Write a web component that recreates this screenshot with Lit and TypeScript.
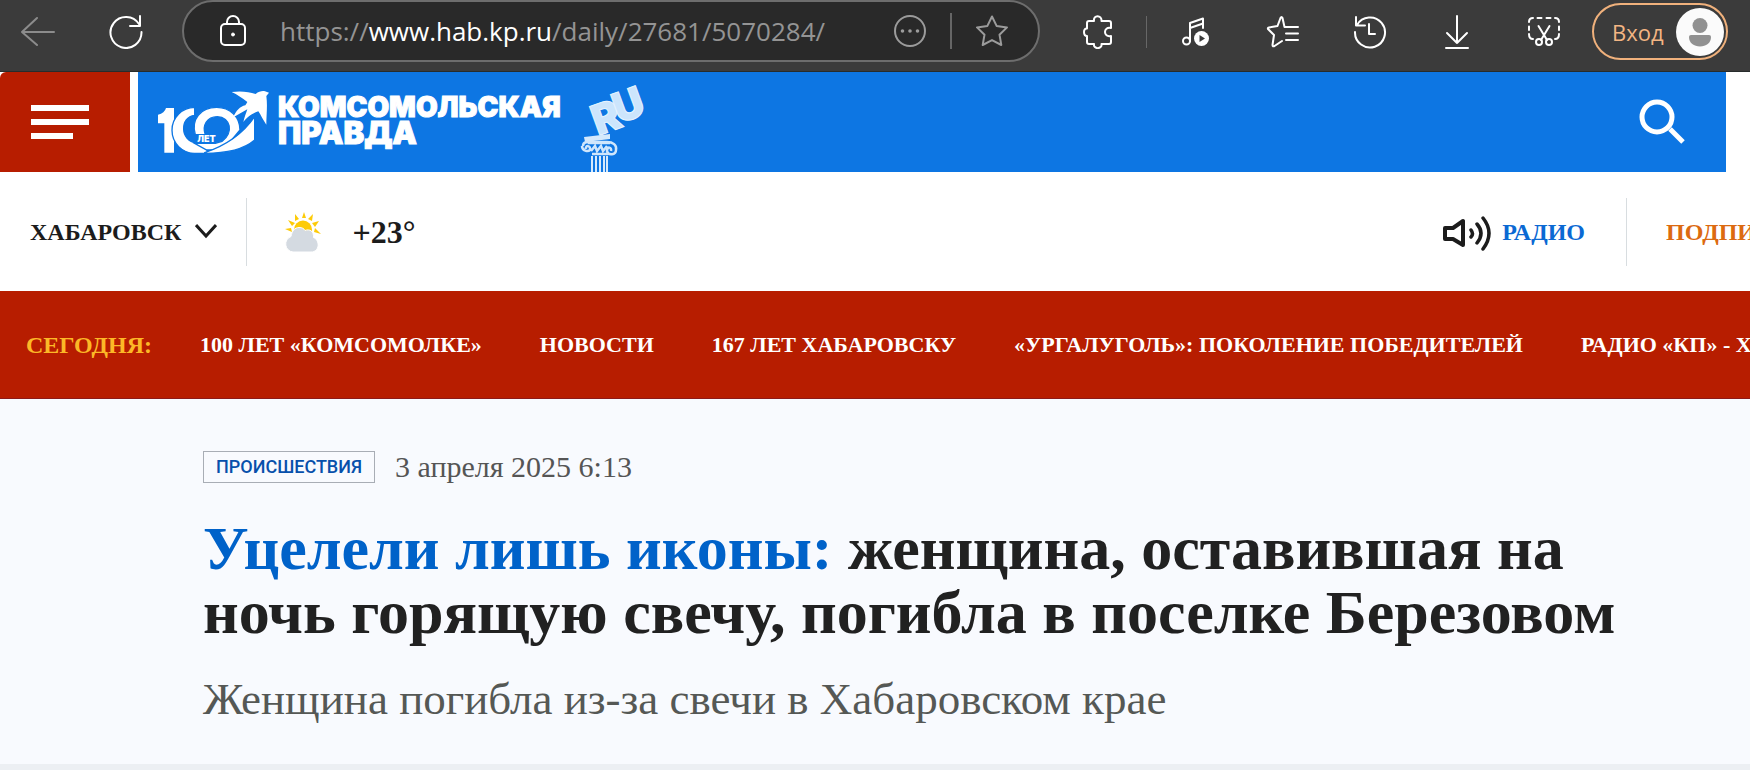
import { LitElement, html, css, svg } from "lit";
import { customElement } from "lit/decorators.js";

@customElement("browser-bar")
class BrowserBar extends LitElement {
  static styles = css`
    :host { display: block; }
    .bar { display: flex; align-items: flex-start; height: 72px; box-sizing: border-box; background: #3b3b3b; border-bottom: 1px solid #272c2c; color: #fff; }
    button { font: inherit; color: inherit; background: none; border: 0; padding: 0; margin: 0; cursor: pointer; display: flex; align-items: center; justify-content: center; flex: none; }
    svg { display: block; fill: none; stroke: currentColor; stroke-width: 2; stroke-linecap: round; stroke-linejoin: round; }
    .tool { width: 87px; height: 64px; }
    .back { width: 76px; color: #8c8c8c; }
    .reload { width: 100px; margin-right: 6px; }
    .address { flex: 1; min-width: 0; height: 62px; box-sizing: border-box; border: 2px solid #6d6d6d; border-radius: 31px; background: #292929; display: flex; align-items: center; margin-right: 14px; }
    .lock { margin-left: 36px; width: 26px; flex: none; }
    .url { flex: 1; min-width: 0; margin-left: 34px; white-space: nowrap; overflow: hidden; font: 26px/40px "Open Sans", "Noto Sans", sans-serif; color: #949494; text-decoration: none; }
    .url b { font-weight: 400; color: #fff; }
    .muted { color: #9b9b9b; width: 32px; height: 58px; }
    .line { width: 2px; height: 36px; background: #666; margin: 0 24px; flex: none; }
    .fav { margin-right: 30px; }
    .split { width: 1px; height: 32px; margin: 16px 5px 0; background: #676767; flex: none; }
    .login { margin: 3px 22px 0 5px; height: 57px; width: 136px; box-sizing: border-box; border: 2px solid #f0b17c; border-radius: 29px; color: #f3b583; font: 22px/32px "Open Sans", "Noto Sans", sans-serif; justify-content: space-between; padding: 0 2px 0 18px; }
    .face { width: 48px; height: 48px; flex: none; }
  `;
  render() {
    return html`<div class="bar">
      <button class="tool back" aria-label="Назад"><svg width="34" height="34" viewBox="0 0 34 34"><path d="M33 17H1M16 3 1 17l15 13"/></svg></button>
      <button class="tool reload" aria-label="Обновить"><svg width="34" height="34" viewBox="0 0 34 34"><path d="M30 9A15.500 15.500 0 1 0 32.500 17M31 1v10H21"/></svg></button>
      <div class="address">
        <svg class="lock" width="26" height="32" viewBox="0 0 26 32"><rect x="1" y="9" width="24" height="21" rx="4"/><path d="M7 9V7a6 6 0 0 1 12 0v2"/><circle cx="13" cy="19.500" r="1.500" fill="currentColor" stroke-width="1"/></svg>
        <a class="url" href="#">https://<b>www.hab.kp.ru</b>/daily/27681/5070284/</a>
        <button class="muted" aria-label="Ещё"><svg width="32" height="32" viewBox="0 0 32 32"><circle cx="16" cy="16" r="15"/><path stroke-width="3.600" d="M8.500 16h.01M16 16h.01M23.500 16h.01"/></svg></button>
        <span class="line"></span>
        <button class="muted fav" aria-label="В избранное"><svg width="32" height="32" viewBox="0 0 32 32"><path d="m16 1.500 4.600 9.400 10.400 1.500-7.500 7.300 1.800 10.300-9.300-4.900L6.700 30l1.800-10.300L1 12.400l10.400-1.500z"/></svg></button>
      </div>
      <button class="tool" aria-label="Расширения"><svg width="30" height="34" viewBox="0 0 30 34"><path d="M4 8q0-2 2-2h5c-1-6.500 8-6.500 7.500 0H26q2 0 2 2v5c-8-2-8 10 0 8v6q0 2-2 2h-7.500c1 5.500-8.500 5.500-7.500 0H6q-2 0-2-2v-6c-4 0-4-8 0-7.500z"/></svg></button>
      <span class="split"></span>
      <button class="tool" aria-label="Медиа"><svg width="28" height="30" viewBox="0 0 28 30"><path d="M8 24V6l13-4.500V11M8 11l13-4.500"/><circle cx="4.500" cy="24" r="3.500"/><circle cx="19.500" cy="21.500" r="7.500" fill="#fff" stroke="none"/><path d="m17.500 18 5.500 3.500-5.500 3.500z" fill="#3b3b3b" stroke="none"/></svg></button>
      <button class="tool" aria-label="Избранное"><svg width="34" height="34" viewBox="0 0 34 34"><path d="M20 12h-1.500L16.500 3q-1-2-2 0L11.500 11 3 12.500q-2 .5-.5 2L8 20 6.500 30q0 2 2 1L16 26M20 12h12M20 18.500h12M20 25h12"/></svg></button>
      <button class="tool" aria-label="Журнал"><svg width="34" height="34" viewBox="0 0 34 34"><path d="M4 10A15 15 0 1 1 2 17M3 2v8.500h9M16 9v10h6"/></svg></button>
      <button class="tool" aria-label="Загрузки"><svg width="26" height="34" viewBox="0 0 26 34"><path d="M13 1v27M3 18l10 10 10-10M2 33h22"/></svg></button>
      <button class="tool" aria-label="Снимок"><svg width="34" height="32" viewBox="0 0 34 32"><path d="M6 2c-3 0-4 1-4 4M10.500 2h4M19.500 2h4M28 2c3 0 4 1 4 4M2 10.500v3.500M32 10.500v3.500M2 18c0 3 1 5 4 5M32 18c0 3-1 5-4 5M11.500 10 20 24M22.500 10 14 24"/><circle cx="12" cy="26" r="3"/><circle cx="22" cy="26" r="3"/></svg></button>
      <button class="login"><span>Вход</span><svg class="face" viewBox="0 0 48 48"><circle cx="24" cy="24" r="24" fill="#fbfbfb" stroke="none"/><circle cx="24" cy="17.500" r="7.500" fill="#919191" stroke="none"/><path d="M15 27h18a2 2 0 0 1 2 2c0 6-5 9.500-11 9.500S13 35 13 29a2 2 0 0 1 2-2z" fill="#919191" stroke="none"/></svg></button>
    </div>`;
  }
}

const centenary = svg`
  <g fill="#fff">
    <path d="M24 98q20-4 24-20h24v134H43v-88H24z"/>
    <path stroke="#0d76e3" stroke-width="4" d="M134 76a68 69 0 1 0 0 138h40l-10-32h-25c-50-4-50-78-5-82z"/>
    <path fill-rule="evenodd" stroke="#0d76e3" stroke-width="4" d="M200 76c40 0 70 28 70 68l-50 60H170L134 184h62l20-6c36-24 26-74-14-74-32 0-46 28-36 54h-30c-14-46 16-82 64-82z"/>
    <path stroke="#0d76e3" stroke-width="4" d="M164 212c60-20 110-50 150-108v70c-30 26-76 40-150 40z"/>
    <path d="M245 30c30-4 52 0 72 6 10-8 20-10 28-8l12 4-8 10c4 28 0 58 0 86-10-14-16-28-24-40-10 4-26 8-45 32 4-16 8-26 12-38l-42 24c8-20 20-32 36-36 2-4 4-6 6-10-16-12-30-22-47-30z"/>
    <text x="142" y="180" class="small">ЛЕТ</text>
  </g>`;

const column = svg`
  <text transform="translate(18 52) rotate(-20)" class="ru">R</text>
  <text transform="translate(39 40) rotate(-20)" class="ru">U</text>
  <path d="M4 53l26-3v5L5 58z" fill="#d5e9fc"/>
  <path d="M8 59h22M3 62c0-5 6-4 9-4h15c6 0 10 3 9 8 0 5-8 6-9 1 0-5 5-4 4 0M10 66c-2 2-8 1-8-4M10 66c1-5-5-5-4-1M12 70h16M11 67l4-5 2 5 4-5 2 5 4-5" fill="none" stroke="#cfe6fc" stroke-width="2.500"/>
  <path d="M12 72v16M16 72v16M20 72v16M24 72v16M27 72v16" stroke="#d5e9fc" stroke-width="2"/>`;

@customElement("app-root")
class AppRoot extends LitElement {
  static styles = css`
    :host { display: block; min-height: 100vh; background: #eceff3; overflow: hidden; color: #1c1c1c; font-family: "Liberation Serif", serif; }
    a { color: inherit; text-decoration: none; }
    button { font: inherit; color: inherit; border: 0; padding: 0; background: none; cursor: pointer; }
    svg { display: block; flex: none; }
    .mast { display: flex; gap: 8px; padding-right: 24px; background: #fff; height: 100px; }
    .menu { width: 130px; background: #b71d00; flex: none; display: flex; flex-direction: column; gap: 8px; justify-content: center; align-items: flex-start; padding-left: 31px; border-top-left-radius: 6px; box-sizing: border-box; }
    .menu i { width: 58px; height: 6px; background: #fff; }
    .menu i:last-child { width: 42px; }
    .brand { flex: 1; background: #0d76e3; display: flex; color: #fff; align-items: flex-start; }
    .home { display: flex; padding-left: 20px; }
    .anniv { margin: 18px 8px 0 0; overflow: visible; }
    .small { font: 900 27px "Inter", sans-serif; }
    .ru { font: 900 42px "Inter", sans-serif; fill: #cce5fc; stroke: #e6f3ff; stroke-width: 1px; }
    .name { display: flex; flex-direction: column; font: 900 28px/25px "Inter", sans-serif; text-transform: uppercase; padding-top: 23px; -webkit-text-stroke: 1px #fff; }
    .name span + span { font-size: 31px; }
    .column { margin-left: 19px; margin-top: 12px; overflow: visible; }
    .search { margin: 26px 41px 0 auto; }
    .info { display: flex; align-items: center; height: 119px; padding-left: 30px; background: #fff; font-size: 24px; line-height: 32px; font-weight: 700; white-space: nowrap; }
    .city { display: flex; align-items: center; gap: 14px; font-weight: 700; }
    .rule { width: 1px; height: 68px; background: #d8dde0; flex: none; }
    .city + .rule { margin: 0 38px 0 29px; }
    .temp { font-size: 32px; margin-left: 31px; }
    .radio { margin-left: auto; display: flex; align-items: center; gap: 11px; color: #0b69d3; }
    .radio + .rule { margin: 0 39px 0 41px; }
    .sub { color: #dc6a10; width: 84px; overflow: hidden; }
    .today { display: flex; align-items: center; height: 108px; box-sizing: border-box; border-bottom: 1px solid #8d1a18; background: #b71d00; color: #fff; padding-left: 26px; font-size: 22px; line-height: 32px; font-weight: 700; white-space: nowrap; overflow: hidden; }
    .today b { color: #fcb827; margin-right: 48px; font-size: 24px; }
    .today nav { display: flex; gap: 58px; }
    .article { background: #f8fafe; padding: 50px 100px 40px 203px; }
    .meta { display: flex; align-items: center; gap: 20px; height: 36px; }
    .tag { border: 1px solid #a8adb5; font: 500 18px/30px Roboto, sans-serif; color: #0750ab; padding: 0 12px; }
    .date { font-size: 30px; line-height: 36px; color: #555; }
    h1 { margin: 31px 0 0; font-size: 62px; line-height: 64px; font-weight: 700; color: #212121; }
    h1 span { color: #0062c9; }
    .lead { margin: 30px 0 0; font-size: 45px; line-height: 50px; color: #555855; }
  `;
  topics = ["100 ЛЕТ «КОМСОМОЛКЕ»", "НОВОСТИ", "167 ЛЕТ ХАБАРОВСКУ", "«УРГАЛУГОЛЬ»: ПОКОЛЕНИЕ ПОБЕДИТЕЛЕЙ", "РАДИО «КП» - ХАБАРОВСК"];
  render() {
    return html`
      <browser-bar></browser-bar>
      <header class="mast">
        <button class="menu" aria-label="Меню"><i></i><i></i><i></i></button>
        <div class="brand">
          <a class="home" href="#">
            <svg class="anniv" width="112" height="64" viewBox="24 24 336 192">${centenary}</svg>
            <span class="name"><span>Комсомольская</span><span>правда</span></span>
          </a>
          <svg class="column" width="76" height="88" viewBox="0 0 76 88">${column}</svg>
          <button class="search" aria-label="Поиск"><svg width="46" height="46" viewBox="0 0 46 46" fill="none" stroke="#fff" stroke-width="5"><circle cx="18" cy="19" r="15"/><path d="m31 31 13 13"/></svg></button>
        </div>
      </header>
      <div class="info">
        <button class="city">ХАБАРОВСК <svg width="22" height="16" viewBox="0 0 22 16" fill="none" stroke="#1c1c1c" stroke-width="3"><path d="m1 1 10 11L21 1"/></svg></button>
        <span class="rule"></span>
        <svg width="36" height="42" viewBox="0 0 36 42"><path fill="#fdcb08" d="m19 1 2 6h-4zM10 3l4 5-4 2zM28 3l-1 7-4-2zM3 9l7 3-3 3zM34 10l-4 6-3-4zM0 18l6-1 1 4zM36 23l-7-2 1-4z"/><circle cx="18" cy="18.500" r="9" fill="#fdcb08"/><path d="M8 41a8 8 0 0 1-2-15.500c1-6 4-9 8-9 3 0 5 1 6 3 5-2 9 1 8.500 7C35 29 35 41 26 41z" fill="#d4dae1" stroke="#fff" stroke-width="1"/></svg>
        <span class="temp">+23°</span>
        <a class="radio" href="#"><svg width="48" height="38" viewBox="0 0 48 38" fill="none" stroke="#1c1c1c" stroke-width="4" stroke-linecap="round" stroke-linejoin="round"><path d="M2 15h8l10-7v24l-10-6H2z"/><path stroke-width="3.500" d="M28 17q3 4 0 7M34 11q8 9 0 19M40 5q12 15 0 31"/></svg>РАДИО</a>
        <span class="rule"></span>
        <a class="sub" href="#">ПОДПИСКА</a>
      </div>
      <div class="today"><b>СЕГОДНЯ:</b><nav>${this.topics.map((t) => html`<a href="#">${t}</a>`)}</nav></div>
      <main class="article">
        <div class="meta"><a class="tag" href="#">ПРОИСШЕСТВИЯ</a><time class="date">3 апреля 2025 6:13</time></div>
        <h1><span>Уцелели лишь иконы:</span> женщина, оставившая на ночь горящую свечу, погибла в поселке Березовом</h1>
        <p class="lead">Женщина погибла из-за свечи в Хабаровском крае</p>
      </main>`;
  }
}
